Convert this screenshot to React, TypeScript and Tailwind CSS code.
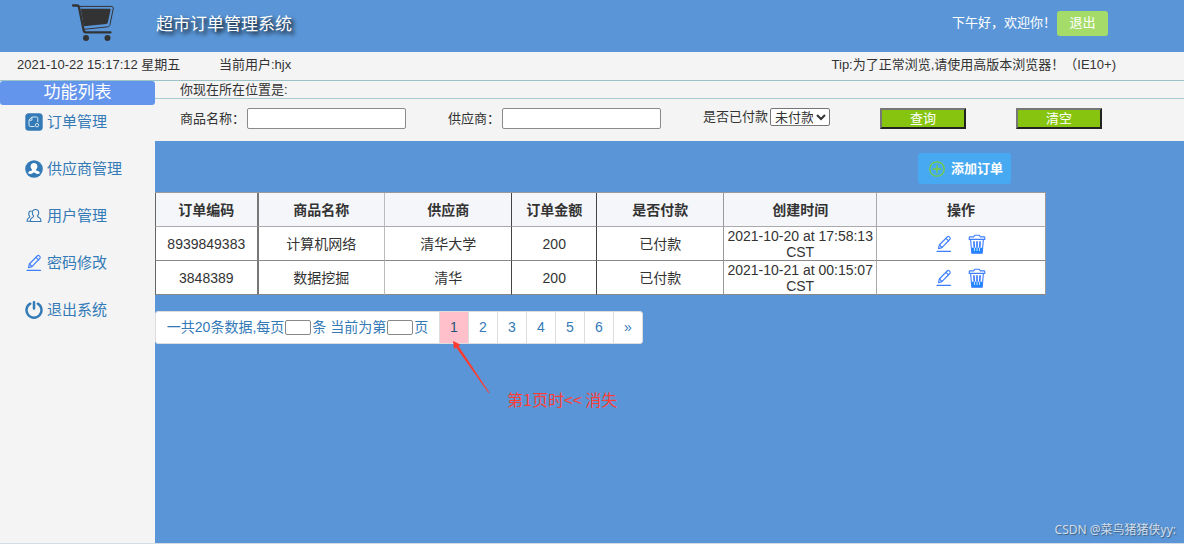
import React from "react";

function CartLogo() {
  return (
    <svg viewBox="0 0 44 38" className="h-[38px] w-[44px]" aria-hidden="true">
      <path d="M2 1.500h4c1.300 0 1.800.6 2 1.800L12.600 26c.3 1.800 1 2.300 2.400 2.300h24.500" fill="none" stroke="#333" strokeWidth="2.300" strokeLinecap="round" strokeLinejoin="round" />
      <path d="M9.800 4.800h28.400c1.200 0 1.500.5 1.300 1.500l-2.700 12.200c-.2.900-.7 1.400-1.700 1.500l-22.300 2.300z" fill="#333" />
      <path d="M9 2.400h31.200c1.800 0 2.300 1 2 2.600l-3.200 15.500c-.3 1.500-1.100 2.200-2.600 2.400L13 25.300" fill="none" stroke="#333" strokeWidth="1" />
      <circle cx="15" cy="34" r="3" fill="#333" />
      <circle cx="36.500" cy="34" r="3" fill="#333" />
    </svg>
  );
}

function OrderIcon() {
  return (
    <svg viewBox="0 0 18 18" className="size-[18px]" aria-hidden="true">
      <rect x="0.300" y="0.300" width="17.400" height="17.400" rx="3.500" fill="#337ab7" />
      <path d="M9.500 13.500H5.200C4.500 13.500 4 13 4 12.300V7l2.800-3h4.900c.7 0 1.100.5 1.100 1.200V9M4.200 7.200h2.700V4.200" fill="none" stroke="#d6e8f7" strokeWidth="1" />
      <circle cx="12" cy="12.200" r="1.700" fill="none" stroke="#d6e8f7" strokeWidth="1" />
    </svg>
  );
}

function SupplierIcon() {
  return (
    <svg viewBox="0 0 18 18" className="size-[18px]" aria-hidden="true">
      <circle cx="9" cy="9" r="8.800" fill="#337ab7" />
      <path d="M9 3c2.100 0 3.400 1.500 3.400 3.500 0 1.400-.7 2.500-1.500 3.200 0 .8.600 1 1.800 1.400 1.300.4 2 1 2.200 2.200-1.400.9-3.500.8-4.900-.3l-1-.8-1 .8c-1.400 1.100-3.500 1.200-4.900.3.200-1.200.9-1.800 2.200-2.200 1.200-.4 1.800-.6 1.800-1.400-.8-.7-1.500-1.800-1.500-3.200C5.600 4.500 6.900 3 9 3z" fill="#fff" />
    </svg>
  );
}

function UsersIcon() {
  return (
    <svg viewBox="0 0 18 18" className="size-[18px]" fill="none" stroke="#337ab7" strokeWidth="1.100" strokeLinejoin="round" strokeLinecap="round" aria-hidden="true">
      <path d="M10.500 2.500c2 0 3.200 1.500 3.200 3.300 0 1.300-.6 2.400-1.300 3.100.1.900.6 1.200 1.600 1.700 1.400.6 2 1.600 2 3.900h-2.800" />
      <path d="M10.500 2.500c-2 0-3.200 1.500-3.200 3.300 0 1.300.6 2.400 1.300 3.100 0 .9-.4 1.200-1.300 1.700-1.500.7-2.100 1.700-2.100 3.900h8" />
      <path d="M6.400 4C4.700 4 3.700 5.200 3.700 6.800c0 1.100.4 2 1.100 2.700 0 .7-.4 1-1.200 1.400-1.100.5-1.600 1.500-1.600 3.300h3" />
    </svg>
  );
}

function PencilIcon() {
  return (
    <svg viewBox="0 0 18 18" className="size-[18px]" fill="none" stroke="#3d7eff" strokeWidth="1.100" strokeLinejoin="round" strokeLinecap="round" aria-hidden="true">
      <path d="M3.500 13.600l.8-3.600 7.900-8c.7-.7 1.500-.7 2.100-.1l.5.5c.6.6.6 1.400-.1 2.100l-7.800 8.200z" />
      <path d="M11 3.300l2.600 2.600M4.500 10l2.400 2.500" />
      <path d="M2 16.300h13.500" strokeWidth="1.300" />
    </svg>
  );
}

function PowerIcon() {
  return (
    <svg viewBox="0 0 18 18" className="size-[18px]" fill="none" stroke="#337ab7" strokeWidth="2.500" strokeLinecap="round" aria-hidden="true">
      <path d="M5.200 2.700a7.500 7.500 0 1 0 7.600 0M9 1.200v6.300" />
    </svg>
  );
}

function TrashIcon() {
  return (
    <svg viewBox="0 0 18 20" className="h-5 w-[18px]" fill="none" stroke="#3d7eff" strokeWidth="1.100" strokeLinejoin="round" aria-hidden="true">
      <path d="M3.400 13.800h11.200l-.5 5.400H3.900z" fill="#1f86ff" stroke="none" />
      <path d="M1.200 5.400V3.700c0-.5.300-.8.800-.8h3.600l1.300-1.700h4.200l1.300 1.700H16c.5 0 .8.300.8.800v1.700zM2.600 5.400l1.200 13.800h10.400l1.200-13.800" />
      <path d="M5.900 7.200l.4 6.600M9 7.200v6.600M12.100 7.200l-.4 6.600" strokeWidth="1.700" />
      <path d="M6.400 14l.2 3M9 14v3M11.600 14l-.2 3" stroke="#d8eaff" strokeWidth="0.900" />
    </svg>
  );
}

function PlusCircle() {
  return (
    <svg viewBox="0 0 16 16" className="size-4" fill="none" stroke="#7ad03a" strokeWidth="1.300" aria-hidden="true">
      <circle cx="8" cy="8" r="7.200" />
      <path d="M8 3.800v8.400M3.800 8h8.400" />
    </svg>
  );
}

const menu = [
  { label: "订单管理", icon: <OrderIcon /> },
  { label: "供应商管理", icon: <SupplierIcon /> },
  { label: "用户管理", icon: <UsersIcon /> },
  { label: "密码修改", icon: <PencilIcon /> },
  { label: "退出系统", icon: <PowerIcon /> },
];

const columns = [
  { title: "订单编码", width: "w-[11.4%]", edge: "border-l border-l-[#666]" },
  { title: "商品名称", width: "w-[14.3%]", edge: "border-l-2 border-l-[#777]" },
  { title: "供应商", width: "w-[14.3%]", edge: "border-l border-l-[#bbb]" },
  { title: "订单金额", width: "w-[9.500%]", edge: "border-l border-l-[#444]" },
  { title: "是否付款", width: "w-[14.3%]", edge: "border-l border-l-[#444]" },
  { title: "创建时间", width: "w-[17.1%]", edge: "border-l border-l-[#999]" },
  { title: "操作", width: "w-[19.1%]", edge: "border-l border-l-[#aaa] border-r border-r-[#999]" },
];

const orders = [
  ["8939849383", "计算机网络", "清华大学", "200", "已付款", "2021-10-20 at 17:58:13 CST"],
  ["3848389", "数据挖掘", "清华", "200", "已付款", "2021-10-21 at 00:15:07 CST"],
];

const pages = ["1", "2", "3", "4", "5", "6", "»"];

const fieldBox = "h-[21px] w-[159px] rounded-[2px] border border-[#8a8a8a] bg-white px-1";
const greenButton =
  "h-[21px] w-[86px] border-2 border-t-[#767676] border-l-[#767676] border-r-[#222] border-b-[#222] bg-[#86c40f] leading-4 text-white";

export default function App() {
  return (
    <div className="flex min-h-screen flex-col border-b border-[#d5dde4] bg-[#f4f4f4] font-['Liberation_Sans','Noto_Sans_CJK_SC',sans-serif] text-[13px] leading-4 text-[#333]">
      <header className="flex h-[52px] items-center bg-[#5a96d7] pr-[76px] pl-[71px] text-white">
        <div className="self-start pt-1">
          <CartLogo />
        </div>
        <h1 className="ml-[41px] pb-[2px] text-[17px] leading-6 [text-shadow:3px_3px_4px_#000]">超市订单管理系统</h1>
        <div className="ml-auto flex items-center pb-[6px]">
          <span>下午好，欢迎你！</span>
          <a href="#logout" className="ml-px flex h-[25px] w-[51px] items-center justify-center rounded-[3px] bg-[#a5dc69]">
            退出
          </a>
        </div>
      </header>

      <div className="flex h-[29px] items-center border-b border-[#9cc3c8] pr-[68px] pb-[3px] pl-[17px]">
        <span className="w-[202px]">2021-10-22 15:17:12 星期五</span>
        <span>当前用户:hjx</span>
        <span className="ml-auto">Tip:为了正常浏览,请使用高版本浏览器！（IE10+)</span>
      </div>

      <div className="flex flex-1">
        <nav className="w-[155px] shrink-0">
          <h2 className="h-6 rounded-[3px] bg-[#6495ed] text-center text-[17px] leading-6 text-white">功能列表</h2>
          <ul className="flex flex-col gap-[29px] pt-2 pl-[25px]">
            {menu.map((item) => (
              <li key={item.label}>
                <a href="#menu" className="flex h-[18px] items-center gap-1 text-[15px] leading-5 text-[#337ab7]">
                  {item.icon}
                  <span>{item.label}</span>
                </a>
              </li>
            ))}
          </ul>
        </nav>

        <main className="flex min-w-0 flex-1 flex-col">
          <div className="h-[18px] border-b border-[#a9cccf] pl-[25px] leading-[17px]">你现在所在位置是:</div>

          <form className="flex h-[42px] items-start pt-[9px] pl-[25px]">
            <label htmlFor="goods" className="w-[67px] leading-[21px]">商品名称：</label>
            <input id="goods" className={fieldBox} />
            <label htmlFor="supplier" className="ml-[42px] w-[54px] leading-[21px]">供应商：</label>
            <input id="supplier" className={fieldBox} />
            <label htmlFor="paid" className="ml-[42px] w-[67px] leading-[18px]">是否已付款</label>
            <select id="paid" className="h-[18px] w-[60px] rounded-[2px] border border-[#767676] bg-white leading-4">
              <option>未付款</option>
            </select>
            <button type="button" className={`ml-[50px] ${greenButton}`}>查询</button>
            <button type="button" className={`ml-[50px] ${greenButton}`}>清空</button>
          </form>

          <section className="relative flex-1 bg-[#5a96d7]">
            <div className="w-[86.600%]">
              <div className="flex h-[51px] items-start justify-end pt-3 pr-[35px]">
                <button type="button" className="flex h-[31px] w-[93px] items-center gap-[6px] rounded-[3px] bg-[#47a9f2] pl-[11px] font-bold text-white">
                  <PlusCircle />
                  <span>添加订单</span>
                </button>
              </div>
              <table className="w-full table-fixed border-separate border-spacing-0 border-t border-[#999] text-center text-[14px]">
                <thead>
                  <tr className="h-[34px] bg-[#f5f6f9]">
                    {columns.map((col) => (
                      <th key={col.title} className={`border-b border-b-[#aaa] p-0 font-bold ${col.width} ${col.edge}`}>
                        {col.title}
                      </th>
                    ))}
                  </tr>
                </thead>
                <tbody>
                  {orders.map((order) => (
                    <tr key={order[0]} className="h-[34px] bg-white">
                      {order.map((value, i) => (
                        <td key={i} className={`border-b border-b-[#888] p-0 ${columns[i].edge}`}>
                          {value}
                        </td>
                      ))}
                      <td className={`border-b border-b-[#888] p-0 ${columns[6].edge}`}>
                        <div className="flex items-center justify-center gap-[15px]">
                          <a href="#edit" aria-label="修改"><PencilIcon /></a>
                          <a href="#delete" aria-label="删除"><TrashIcon /></a>
                        </div>
                      </td>
                    </tr>
                  ))}
                </tbody>
              </table>
            </div>

            <div className="mt-4 flex w-fit overflow-hidden rounded-[3px] border border-[#ddd] bg-white text-[14px] leading-[31px] text-[#337ab7]">
              <div className="flex w-[283px] items-center justify-center whitespace-pre">
                <label htmlFor="size">一共20条数据,每页</label>
                <input id="size" className="mx-px h-[15px] w-[26px] rounded-[2px] border border-[#888] bg-white" />
                <span>条 </span>
                <label htmlFor="page">当前为第</label>
                <input id="page" className="mx-px h-[15px] w-[26px] rounded-[2px] border border-[#888] bg-white" />
                <span>页</span>
              </div>
              {pages.map((p) => (
                <a
                  key={p}
                  href="#page"
                  className={`w-[29px] border-l border-[#ddd] text-center ${p === "1" ? "bg-[#ffc0cb] text-[#23527c]" : ""}`}
                >
                  {p}
                </a>
              ))}
            </div>

            <svg viewBox="0 0 38 53" className="absolute top-[200px] left-[298px] h-[53px] w-[38px]" aria-hidden="true">
              <path d="M0 0l1 8 2.200-1.400L35.500 52l.8-.5L5.500 5 7.400 3.600z" fill="#ff3b30" />
            </svg>
            <p className="absolute top-[246px] left-[352px] font-['Noto_Sans_CJK_SC',sans-serif] text-[16px] leading-6 text-[#fb3f38]">
              第1页时&lt;&lt; 消失
            </p>
            <p className="absolute right-2 bottom-[5px] font-['Noto_Sans','Noto_Sans_CJK_SC',sans-serif] text-[12px] leading-4 text-[#d2deec] [text-shadow:1px_1px_1px_#41607f]">
              CSDN @菜鸟猪猪侠yy:
            </p>
          </section>
        </main>
      </div>
    </div>
  );
}
